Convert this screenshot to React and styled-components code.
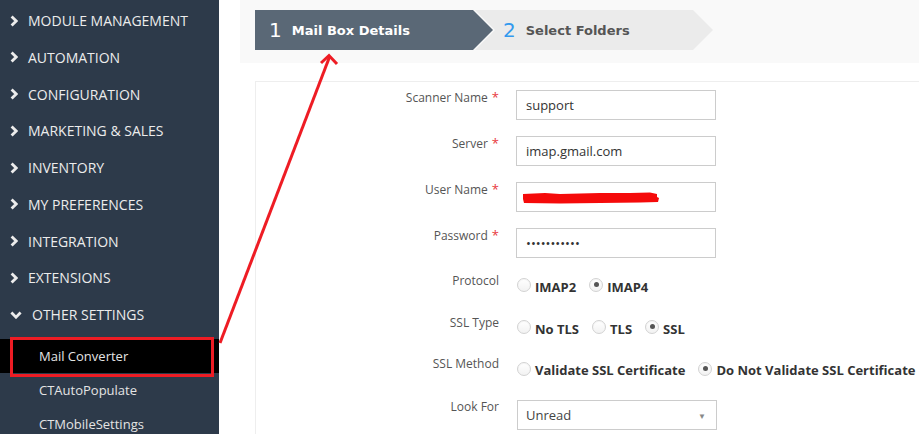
import React from 'react';
import styled, { createGlobalStyle } from 'styled-components';

const GlobalStyle = createGlobalStyle`
  html, body { margin: 0; padding: 0; background: #fff; overflow: hidden; }
  body { font-family: "Open Sans", "Liberation Sans", sans-serif; }
  * { box-sizing: border-box; }
`;

const Page = styled.div`
  position: relative;
  display: flex;
  width: 919px;
  height: 434px;
  overflow: hidden;
`;

const Sidebar = styled.nav`
  flex: none;
  width: 219px;
  height: 100%;
  background: #2d3a4a;
  padding-top: 2.2px;
`;

const MenuItem = styled.div`
  display: flex;
  align-items: center;
  gap: 10px;
  height: 36.75px;
  padding-left: 10px;
  color: #ececec;
  font-size: 14px;
  text-transform: uppercase;
  white-space: nowrap;
`;

const SubList = styled.div`
  margin-top: 6px;
`;

const SubItem = styled.div`
  display: flex;
  align-items: center;
  height: 34px;
  padding-left: 39px;
  font-size: 13px;
  color: #e4e4e4;
  background: ${p => (p.$active ? '#000' : 'transparent')};
`;

const Main = styled.main`
  flex: 1;
  min-width: 0;
  padding-left: 21px;
  display: flex;
  flex-direction: column;
`;

const StepBar = styled.div`
  flex: none;
  display: flex;
  height: 63px;
  padding: 10px 15px;
  background: #f9f9f9;
`;

const Step = styled.div`
  display: flex;
  align-items: center;
  width: 238px;
  height: 40px;
  margin-left: ${p => (p.$first ? '0' : '-18px')};
  padding-left: ${p => (p.$first ? '14px' : '28px')};
  background: ${p => (p.$active ? '#5a6876' : '#ebebeb')};
  clip-path: ${p =>
    p.$first
      ? 'polygon(0 0, calc(100% - 20px) 0, 100% 50%, calc(100% - 20px) 100%, 0 100%)'
      : 'polygon(0 0, calc(100% - 20px) 0, 100% 50%, calc(100% - 20px) 100%, 0 100%, 20px 50%)'};
  font-family: "DejaVu Sans", "Liberation Sans", sans-serif;
`;

const StepNum = styled.span`
  font-size: 20px;
  margin-right: 10px;
  color: ${p => (p.$active ? '#fff' : '#3399ee')};
`;

const StepLabel = styled.span`
  font-size: 13px;
  font-weight: bold;
  color: ${p => (p.$active ? '#fff' : '#555')};
`;

const Panel = styled.section`
  flex: none;
  margin: 18px -10px 0 15px;
  border: 1px solid #eee;
  padding-top: 5.5px;
`;

const Row = styled.div`
  display: grid;
  grid-template-columns: 243px 1fr;
  column-gap: 17px;
  align-items: start;
  height: ${p => p.$h}px;
`;

const Label = styled.div`
  text-align: right;
  font-size: 12px;
  line-height: 18.5px;
  color: #555;
  white-space: nowrap;
`;

const Req = styled.span`
  color: #e8383d;
  font-size: 13px;
  margin-left: 4px;
`;

const Field = styled.div`
  padding-top: ${p => p.$pt}px;
`;

const TextInput = styled.input`
  display: block;
  width: 200px;
  height: 30px;
  margin: 0;
  padding: 0 9px;
  border: 1px solid #ccc;
  border-radius: 0;
  font-family: "Open Sans", "Liberation Sans", sans-serif;
  font-size: 13px;
  color: #333;
  background: #fff;
  outline: none;
`;

const RadioGroup = styled.div`
  display: flex;
  align-items: center;
  height: 18px;
  margin-left: 1px;
`;

const RadioOption = styled.label`
  display: flex;
  align-items: center;
  gap: 4px;
  margin-right: 13px;
  font-size: 13px;
  line-height: 18px;
  font-weight: 700;
  color: #333;
  white-space: nowrap;
`;

const RadioCircle = styled.span`
  position: relative;
  flex: none;
  width: 14px;
  height: 14px;
  margin-bottom: 3px;
  border-radius: 50%;
  border: 1px solid #d2d2d2;
  background: linear-gradient(#fff, #f2f2f2);
  box-shadow: inset 0 1px 1px rgba(0, 0, 0, 0.04);
  &::after {
    content: '';
    display: ${p => (p.$checked ? 'block' : 'none')};
    position: absolute;
    left: 3.5px;
    top: 3px;
    width: 5px;
    height: 5px;
    border-radius: 50%;
    background: #555;
  }
`;

const Select = styled.div`
  display: flex;
  align-items: center;
  justify-content: space-between;
  width: 200px;
  height: 30px;
  margin-left: 1px;
  padding: 0 10px 0 8px;
  border: 1px solid #ccc;
  font-size: 13px;
  color: #444;
  background: #fff;
`;

const Caret = styled.span`
  font-size: 8px;
  color: #888;
`;

const Overlay = styled.svg`
  position: absolute;
  left: 0;
  top: 0;
  pointer-events: none;
`;

const ChevronRight = () => (
  <svg width="8" height="12" viewBox="0 0 8 12">
    <path d="M1.6 1.4 L6.2 6 L1.6 10.6" fill="none" stroke="#ececec" strokeWidth="2.8" />
  </svg>
);

const ChevronDown = () => (
  <svg width="12" height="8" viewBox="0 0 12 8">
    <path d="M1.4 1.6 L6 6.2 L10.6 1.6" fill="none" stroke="#ececec" strokeWidth="2.8" />
  </svg>
);

const menu = [
  'Module Management',
  'Automation',
  'Configuration',
  'Marketing & Sales',
  'Inventory',
  'My Preferences',
  'Integration',
  'Extensions',
];

const Radios = ({ options, checked }) => (
  <RadioGroup>
    {options.map(o => (
      <RadioOption key={o}>
        <RadioCircle $checked={o === checked} />
        {o}
      </RadioOption>
    ))}
  </RadioGroup>
);

export default function App() {
  return (
    <Page>
      <GlobalStyle />
      <Sidebar>
        {menu.map(m => (
          <MenuItem key={m}>
            <ChevronRight />
            {m}
          </MenuItem>
        ))}
        <MenuItem>
          <ChevronDown />
          Other Settings
        </MenuItem>
        <SubList>
          <SubItem $active>Mail Converter</SubItem>
          <SubItem>CTAutoPopulate</SubItem>
          <SubItem>CTMobileSettings</SubItem>
        </SubList>
      </Sidebar>
      <Main>
        <StepBar>
          <Step $first $active>
            <StepNum $active>1</StepNum>
            <StepLabel $active>Mail Box Details</StepLabel>
          </Step>
          <Step>
            <StepNum>2</StepNum>
            <StepLabel>Select Folders</StepLabel>
          </Step>
        </StepBar>
        <Panel>
          <Row $h={46}>
            <Label>Scanner Name<Req>*</Req></Label>
            <Field $pt={2.5}><TextInput readOnly defaultValue="support" /></Field>
          </Row>
          <Row $h={46}>
            <Label>Server<Req>*</Req></Label>
            <Field $pt={2.5}><TextInput readOnly defaultValue="imap.gmail.com" /></Field>
          </Row>
          <Row $h={46}>
            <Label>User Name<Req>*</Req></Label>
            <Field $pt={2.5}><TextInput readOnly defaultValue="" /></Field>
          </Row>
          <Row $h={46}>
            <Label>Password<Req>*</Req></Label>
            <Field $pt={2.5}><TextInput readOnly type="password" defaultValue="xxxxxxxxxxx" /></Field>
          </Row>
          <Row $h={42}>
            <Label>Protocol</Label>
            <Field $pt={6}><Radios options={['IMAP2', 'IMAP4']} checked="IMAP4" /></Field>
          </Row>
          <Row $h={41.5}>
            <Label>SSL Type</Label>
            <Field $pt={6}><Radios options={['No TLS', 'TLS', 'SSL']} checked="SSL" /></Field>
          </Row>
          <Row $h={42.5}>
            <Label>SSL Method</Label>
            <Field $pt={6}>
              <Radios
                options={['Validate SSL Certificate', 'Do Not Validate SSL Certificate']}
                checked="Do Not Validate SSL Certificate"
              />
            </Field>
          </Row>
          <Row $h={42}>
            <Label>Look For</Label>
            <Field $pt={2.5}>
              <Select>
                Unread
                <Caret>▼</Caret>
              </Select>
            </Field>
          </Row>
        </Panel>
      </Main>
      <Overlay width="919" height="434" viewBox="0 0 919 434">
        <rect x="11.5" y="338.5" width="201" height="37" fill="none" stroke="#ee1c24" strokeWidth="3" />
        <path d="M220 343 L329.5 57" stroke="#ee1c24" strokeWidth="3" fill="none" />
        <path d="M321 63 L329 55.5 L337 64" stroke="#ee1c24" strokeWidth="3" fill="none" />
        <path
          d="M523 194 L545 193 L560 194 L600 193 L630 193 L650 192.5 L657 194 L657 197 L659 198 L658 202 L640 202.5 L600 203 L560 203.5 L524 203 L523 199 Z"
          fill="#f50a0a"
        />
      </Overlay>
    </Page>
  );
}
